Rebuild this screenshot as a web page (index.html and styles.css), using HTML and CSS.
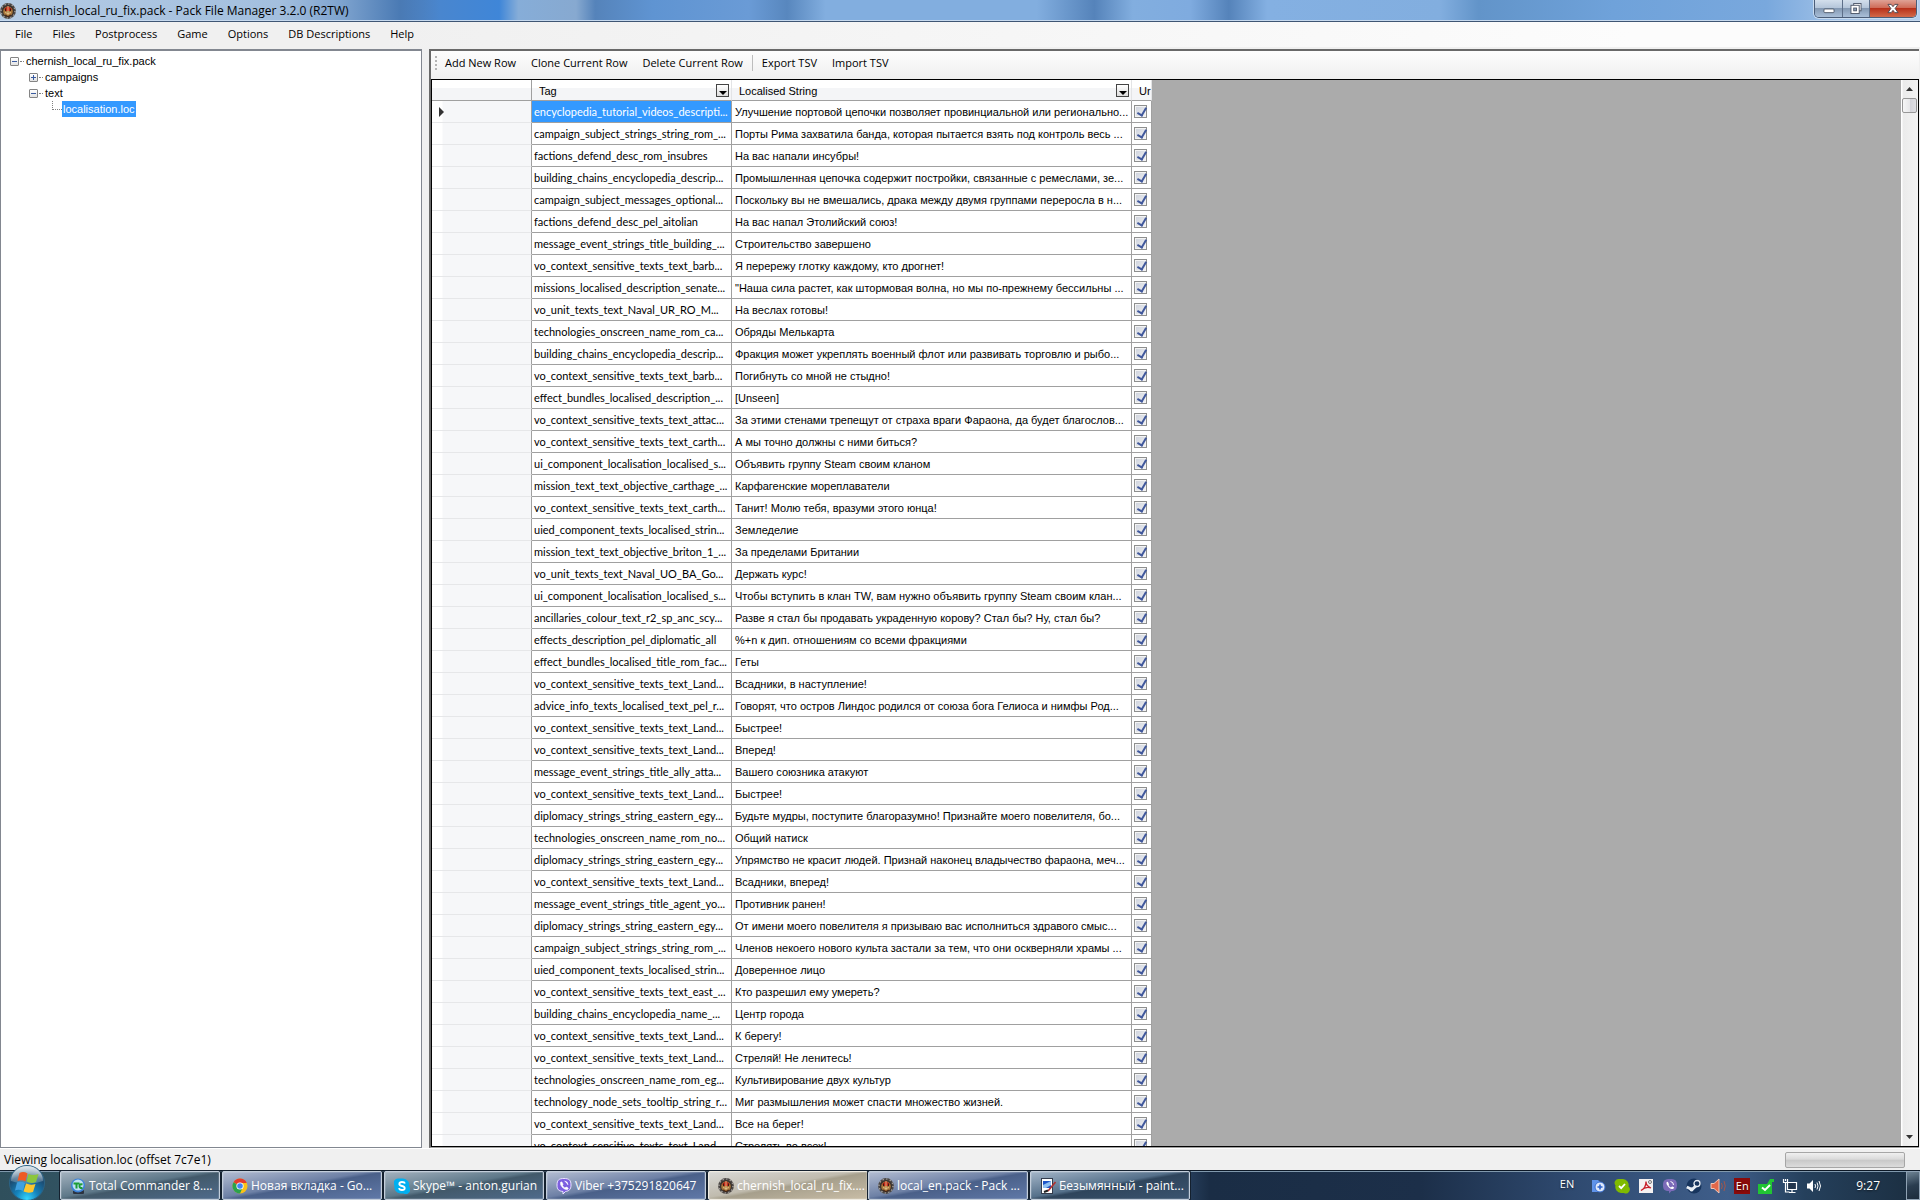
FILE: index.html
```html
<!DOCTYPE html>
<html lang="en">
<head>
<meta charset="utf-8">
<title>chernish_local_ru_fix.pack - Pack File Manager 3.2.0 (R2TW)</title>
<link rel="stylesheet" href="styles.css">
</head>
<body>
<svg class="defs" aria-hidden="true">
  <symbol id="emblem" viewBox="0 0 16 16">
    <circle cx="8" cy="8" r="7" fill="#3a332e" stroke="#4a4644" stroke-width="1.800"/>
    <circle cx="8" cy="8" r="7" fill="none" stroke="#b5b0ac" stroke-width="1.200" stroke-dasharray="1.200 2.460"/>
    <ellipse cx="8" cy="8.500" rx="4.800" ry="5" fill="#a8763c"/>
    <path d="M4 6 8 3l4 3-1.500 2h-5z" fill="#c22a1c"/>
    <path d="M8 3v9M5 9.500l3 1 3-1" stroke="#e8cf96" stroke-width=".8" fill="none"/>
    <path d="M5.500 5.500v2.500M10.500 5.500v2.500M5 12l3 1.500 3-1.500" stroke="#3a1c10" stroke-width="1" fill="none"/>
  </symbol>
</svg>

<header class="titlebar">
  <svg class="app-icon"><use href="#emblem"/></svg>
  <h1>chernish_local_ru_fix.pack - Pack File Manager 3.2.0 (R2TW)</h1>
  <div class="window-buttons">
    <button type="button" class="win-min" aria-label="Minimize"><svg viewBox="0 0 12 12"><rect x=".5" y="6.500" width="11" height="4" rx="1" fill="#fff" stroke="#4c5668"/></svg></button>
    <button type="button" class="win-max" aria-label="Restore"><svg viewBox="0 0 12 12"><rect x="3.500" y=".5" width="8" height="8" fill="#fff" stroke="#4c5668"/><rect x=".5" y="2.500" width="9" height="9" fill="#fff" stroke="#4c5668"/><rect x="3.500" y="5.500" width="3" height="3" fill="#8fa3bd" stroke="#4c5668"/></svg></button>
    <button type="button" class="win-close" aria-label="Close"><svg viewBox="0 0 12 12"><path d="M.5 1.500h3.500l2 2.500 2-2.500h3.500L8.300 6l3.200 4.500H8L6 8l-2 2.500H.5L3.700 6z" fill="#fff" stroke="#4c4650"/></svg></button>
  </div>
</header>

<nav class="menubar" aria-label="Main menu">
  <button type="button">File</button>
  <button type="button">Files</button>
  <button type="button">Postprocess</button>
  <button type="button">Game</button>
  <button type="button">Options</button>
  <button type="button">DB Descriptions</button>
  <button type="button">Help</button>
</nav>

<main class="workspace">
  <section class="tree-panel" aria-label="Pack contents">
    <ul class="tree">
      <li><div class="node"><span class="toggle open"></span>chernish_local_ru_fix.pack</div>
        <ul>
          <li><div class="node"><span class="toggle closed"></span>campaigns</div></li>
          <li><div class="node"><span class="toggle open"></span>text</div>
            <ul>
              <li><div class="node leaf"><span class="selected">localisation.loc</span></div></li>
            </ul>
          </li>
        </ul>
      </li>
    </ul>
  </section>

  <section class="editor" aria-label="Localisation editor">
    <div class="toolbar">
      <span class="grip"></span>
      <button type="button">Add New Row</button>
      <button type="button">Clone Current Row</button>
      <button type="button">Delete Current Row</button>
      <span class="divider"></span>
      <button type="button">Export TSV</button>
      <button type="button">Import TSV</button>
    </div>
    <div class="grid-frame">
      <div class="grid-area">
        <table class="grid">
          <colgroup><col class="c-head"><col class="c-tag"><col class="c-text"><col class="c-check"></colgroup>
          <thead>
            <tr>
              <td></td>
              <th scope="col"><div class="head">Tag<button type="button" class="filter" aria-label="Filter Tag"></button></div></th>
              <th scope="col"><div class="head">Localised String<button type="button" class="filter" aria-label="Filter Localised String"></button></div></th>
              <th scope="col"><div class="head">Ur</div></th>
            </tr>
          </thead>
          <tbody>
            <tr class="current"><th scope="row"><span class="marker"></span></th><td>encyclopedia_tutorial_videos_descripti...</td><td>Улучшение портовой цепочки позволяет провинциальной или регионально...</td><td><input type="checkbox" checked aria-label="Row 1"></td></tr>
            <tr><th scope="row"></th><td>campaign_subject_strings_string_rom_...</td><td>Порты Рима захватила банда, которая пытается взять под контроль весь ...</td><td><input type="checkbox" checked aria-label="Row 2"></td></tr>
            <tr><th scope="row"></th><td>factions_defend_desc_rom_insubres</td><td>На вас напали инсубры!</td><td><input type="checkbox" checked aria-label="Row 3"></td></tr>
            <tr><th scope="row"></th><td>building_chains_encyclopedia_descrip...</td><td>Промышленная цепочка содержит постройки, связанные с ремеслами, зе...</td><td><input type="checkbox" checked aria-label="Row 4"></td></tr>
            <tr><th scope="row"></th><td>campaign_subject_messages_optional...</td><td>Поскольку вы не вмешались, драка между двумя группами переросла в н...</td><td><input type="checkbox" checked aria-label="Row 5"></td></tr>
            <tr><th scope="row"></th><td>factions_defend_desc_pel_aitolian</td><td>На вас напал Этолийский союз!</td><td><input type="checkbox" checked aria-label="Row 6"></td></tr>
            <tr><th scope="row"></th><td>message_event_strings_title_building_...</td><td>Строительство завершено</td><td><input type="checkbox" checked aria-label="Row 7"></td></tr>
            <tr><th scope="row"></th><td>vo_context_sensitive_texts_text_barb...</td><td>Я перережу глотку каждому, кто дрогнет!</td><td><input type="checkbox" checked aria-label="Row 8"></td></tr>
            <tr><th scope="row"></th><td>missions_localised_description_senate...</td><td>"Наша сила растет, как штормовая волна, но мы по-прежнему бессильны ...</td><td><input type="checkbox" checked aria-label="Row 9"></td></tr>
            <tr><th scope="row"></th><td>vo_unit_texts_text_Naval_UR_RO_M...</td><td>На веслах готовы!</td><td><input type="checkbox" checked aria-label="Row 10"></td></tr>
            <tr><th scope="row"></th><td>technologies_onscreen_name_rom_ca...</td><td>Обряды Мелькарта</td><td><input type="checkbox" checked aria-label="Row 11"></td></tr>
            <tr><th scope="row"></th><td>building_chains_encyclopedia_descrip...</td><td>Фракция может укреплять военный флот или развивать торговлю и рыбо...</td><td><input type="checkbox" checked aria-label="Row 12"></td></tr>
            <tr><th scope="row"></th><td>vo_context_sensitive_texts_text_barb...</td><td>Погибнуть со мной не стыдно!</td><td><input type="checkbox" checked aria-label="Row 13"></td></tr>
            <tr><th scope="row"></th><td>effect_bundles_localised_description_...</td><td>[Unseen]</td><td><input type="checkbox" checked aria-label="Row 14"></td></tr>
            <tr><th scope="row"></th><td>vo_context_sensitive_texts_text_attac...</td><td>За этими стенами трепещут от страха враги Фараона, да будет благослов...</td><td><input type="checkbox" checked aria-label="Row 15"></td></tr>
            <tr><th scope="row"></th><td>vo_context_sensitive_texts_text_carth...</td><td>А мы точно должны с ними биться?</td><td><input type="checkbox" checked aria-label="Row 16"></td></tr>
            <tr><th scope="row"></th><td>ui_component_localisation_localised_s...</td><td>Объявить группу Steam своим кланом</td><td><input type="checkbox" checked aria-label="Row 17"></td></tr>
            <tr><th scope="row"></th><td>mission_text_text_objective_carthage_...</td><td>Карфагенские мореплаватели</td><td><input type="checkbox" checked aria-label="Row 18"></td></tr>
            <tr><th scope="row"></th><td>vo_context_sensitive_texts_text_carth...</td><td>Танит! Молю тебя, вразуми этого юнца!</td><td><input type="checkbox" checked aria-label="Row 19"></td></tr>
            <tr><th scope="row"></th><td>uied_component_texts_localised_strin...</td><td>Земледелие</td><td><input type="checkbox" checked aria-label="Row 20"></td></tr>
            <tr><th scope="row"></th><td>mission_text_text_objective_briton_1_...</td><td>За пределами Британии</td><td><input type="checkbox" checked aria-label="Row 21"></td></tr>
            <tr><th scope="row"></th><td>vo_unit_texts_text_Naval_UO_BA_Go...</td><td>Держать курс!</td><td><input type="checkbox" checked aria-label="Row 22"></td></tr>
            <tr><th scope="row"></th><td>ui_component_localisation_localised_s...</td><td>Чтобы вступить в клан TW, вам нужно объявить группу Steam своим клан...</td><td><input type="checkbox" checked aria-label="Row 23"></td></tr>
            <tr><th scope="row"></th><td>ancillaries_colour_text_r2_sp_anc_scy...</td><td>Разве я стал бы продавать украденную корову? Стал бы? Ну, стал бы?</td><td><input type="checkbox" checked aria-label="Row 24"></td></tr>
            <tr><th scope="row"></th><td>effects_description_pel_diplomatic_all</td><td>%+n к дип. отношениям со всеми фракциями</td><td><input type="checkbox" checked aria-label="Row 25"></td></tr>
            <tr><th scope="row"></th><td>effect_bundles_localised_title_rom_fac...</td><td>Геты</td><td><input type="checkbox" checked aria-label="Row 26"></td></tr>
            <tr><th scope="row"></th><td>vo_context_sensitive_texts_text_Land...</td><td>Всадники, в наступление!</td><td><input type="checkbox" checked aria-label="Row 27"></td></tr>
            <tr><th scope="row"></th><td>advice_info_texts_localised_text_pel_r...</td><td>Говорят, что остров Линдос родился от союза бога Гелиоса и нимфы Род...</td><td><input type="checkbox" checked aria-label="Row 28"></td></tr>
            <tr><th scope="row"></th><td>vo_context_sensitive_texts_text_Land...</td><td>Быстрее!</td><td><input type="checkbox" checked aria-label="Row 29"></td></tr>
            <tr><th scope="row"></th><td>vo_context_sensitive_texts_text_Land...</td><td>Вперед!</td><td><input type="checkbox" checked aria-label="Row 30"></td></tr>
            <tr><th scope="row"></th><td>message_event_strings_title_ally_atta...</td><td>Вашего союзника атакуют</td><td><input type="checkbox" checked aria-label="Row 31"></td></tr>
            <tr><th scope="row"></th><td>vo_context_sensitive_texts_text_Land...</td><td>Быстрее!</td><td><input type="checkbox" checked aria-label="Row 32"></td></tr>
            <tr><th scope="row"></th><td>diplomacy_strings_string_eastern_egy...</td><td>Будьте мудры, поступите благоразумно! Признайте моего повелителя, бо...</td><td><input type="checkbox" checked aria-label="Row 33"></td></tr>
            <tr><th scope="row"></th><td>technologies_onscreen_name_rom_no...</td><td>Общий натиск</td><td><input type="checkbox" checked aria-label="Row 34"></td></tr>
            <tr><th scope="row"></th><td>diplomacy_strings_string_eastern_egy...</td><td>Упрямство не красит людей. Признай наконец владычество фараона, меч...</td><td><input type="checkbox" checked aria-label="Row 35"></td></tr>
            <tr><th scope="row"></th><td>vo_context_sensitive_texts_text_Land...</td><td>Всадники, вперед!</td><td><input type="checkbox" checked aria-label="Row 36"></td></tr>
            <tr><th scope="row"></th><td>message_event_strings_title_agent_yo...</td><td>Противник ранен!</td><td><input type="checkbox" checked aria-label="Row 37"></td></tr>
            <tr><th scope="row"></th><td>diplomacy_strings_string_eastern_egy...</td><td>От имени моего повелителя я призываю вас исполниться здравого смыс...</td><td><input type="checkbox" checked aria-label="Row 38"></td></tr>
            <tr><th scope="row"></th><td>campaign_subject_strings_string_rom_...</td><td>Членов некоего нового культа застали за тем, что они оскверняли храмы ...</td><td><input type="checkbox" checked aria-label="Row 39"></td></tr>
            <tr><th scope="row"></th><td>uied_component_texts_localised_strin...</td><td>Доверенное лицо</td><td><input type="checkbox" checked aria-label="Row 40"></td></tr>
            <tr><th scope="row"></th><td>vo_context_sensitive_texts_text_east_...</td><td>Кто разрешил ему умереть?</td><td><input type="checkbox" checked aria-label="Row 41"></td></tr>
            <tr><th scope="row"></th><td>building_chains_encyclopedia_name_...</td><td>Центр города</td><td><input type="checkbox" checked aria-label="Row 42"></td></tr>
            <tr><th scope="row"></th><td>vo_context_sensitive_texts_text_Land...</td><td>К берегу!</td><td><input type="checkbox" checked aria-label="Row 43"></td></tr>
            <tr><th scope="row"></th><td>vo_context_sensitive_texts_text_Land...</td><td>Стреляй! Не ленитесь!</td><td><input type="checkbox" checked aria-label="Row 44"></td></tr>
            <tr><th scope="row"></th><td>technologies_onscreen_name_rom_eg...</td><td>Культивирование двух культур</td><td><input type="checkbox" checked aria-label="Row 45"></td></tr>
            <tr><th scope="row"></th><td>technology_node_sets_tooltip_string_r...</td><td>Миг размышления может спасти множество жизней.</td><td><input type="checkbox" checked aria-label="Row 46"></td></tr>
            <tr><th scope="row"></th><td>vo_context_sensitive_texts_text_Land...</td><td>Все на берег!</td><td><input type="checkbox" checked aria-label="Row 47"></td></tr>
            <tr><th scope="row"></th><td>vo_context_sensitive_texts_text_Land...</td><td>Стрелять во всех!</td><td><input type="checkbox" checked aria-label="Row 48"></td></tr>
          </tbody>
        </table>
      </div>
      <div class="scrollbar">
        <button type="button" aria-label="Scroll up"><svg viewBox="0 0 7 4"><path d="M0 4 3.500 0 7 4z" fill="#333"/></svg></button>
        <span class="thumb"></span>
        <button type="button" class="down" aria-label="Scroll down"><svg viewBox="0 0 7 4"><path d="M0 0h7L3.500 4z" fill="#333"/></svg></button>
      </div>
    </div>
  </section>
</main>

<footer class="statusbar">
  <span>Viewing localisation.loc (offset 7c7e1)</span>
  <span class="progress"></span>
</footer>

<nav class="taskbar" aria-label="Taskbar">
  <button type="button" class="start" aria-label="Start">
    <svg viewBox="0 0 38 36">
      <defs>
        <radialGradient id="orb" cx=".5" cy=".95" r=".9"><stop offset="0" stop-color="#35d6ff"/><stop offset=".35" stop-color="#1584bd"/><stop offset=".75" stop-color="#1c4a70"/><stop offset="1" stop-color="#7f9fb4"/></radialGradient>
        <linearGradient id="gloss" x2="0" y2="1"><stop offset="0" stop-color="#fff" stop-opacity=".75"/><stop offset="1" stop-color="#fff" stop-opacity=".15"/></linearGradient>
      </defs>
      <circle cx="19" cy="18" r="17.500" fill="url(#orb)" stroke="#2b6386"/>
      <path d="M3 16a16 15 0 0 1 32 0q-16 6-32 0z" fill="url(#gloss)"/>
      <path d="M11.500 8q4-2 8 .5l-2 8q-4-2-8-.5z" fill="#ee5a24"/>
      <path d="M20.500 9q4.500 2 10 0l-2.500 8q-5 2-9.500-.5z" fill="#8cc63e"/>
      <path d="M9 17.500q4-1.500 8 .5l-2 8q-4-2-8-.5z" fill="#3fa0e0"/>
      <path d="M18 18.500q4.500 2 9.500.500l-2.500 8q-5 1.500-9.500-.5z" fill="#fdc62f"/>
    </svg>
  </button>
  <div class="tasks">
    <button type="button" class="task teal"><svg viewBox="0 0 16 16"><rect x="3" y="12" width="11" height="4" rx="1" fill="#2c3340"/><circle cx="8" cy="7.500" r="7" fill="#3b82d8"/><circle cx="8" cy="7" r="5.500" fill="#bfe0f5"/><path d="M3.500 5.500h6M6.500 5.500v5M12.500 6.500q-3-1-3 1.500t3 2" stroke="#1d9c35" stroke-width="2" fill="none"/></svg>Total Commander 8....</button>
    <button type="button" class="task blue"><svg viewBox="0 0 16 16"><circle cx="8" cy="8" r="7.500" fill="#fbc116"/><path d="M8 8 1.500 4.250A7.500 7.500 0 0 1 14.500 4.250L14.500 5H8z" fill="#e33b2e"/><path d="M1.500 4.250A7.500 7.500 0 0 0 8 15.500L10.500 10z" fill="#2ba24c"/><circle cx="8" cy="8" r="3.600" fill="#fff"/><circle cx="8" cy="8" r="2.800" fill="#4285f4"/></svg>Новая вкладка - Go...</button>
    <button type="button" class="task teal"><svg viewBox="0 0 16 16"><path d="M5 .5h4a6.500 6.500 0 0 1 6 8 4.500 4.500 0 0 1-5.500 7h-3a6.500 6.500 0 0 1-6-8A4.500 4.500 0 0 1 5 .5z" fill="#00aff0"/><path d="M11 5.500Q10.500 4 8 4T5.300 6q0 1.400 2.700 2t2.700 2.200Q10.700 12 8 12t-3-1.800" stroke="#fff" stroke-width="1.800" fill="none"/></svg>Skype™ - anton.gurian</button>
    <button type="button" class="task blue"><svg viewBox="0 0 16 16"><path d="M8 .5c5 0 7 1.500 7 6.500 0 4.500-2 6-5.500 6.500L7 16v-2.500C2.500 13 1 11.500 1 7 1 2 3 .5 8 .5z" fill="#7d5fe0" stroke="#e9e3ff"/><path d="M4.500 4.500q1-1.500 2 .5t0 2.500q1 2 2.500 2.500 1-1.500 2.500-.5t0 2Q9 12 6.500 9.500T4.500 4.500zM8.500 3q3.500.5 3.500 4" fill="#fff" stroke="#fff" stroke-width=".6"/></svg>Viber +375291820647</button>
    <div class="task-pair">
      <button type="button" class="task active"><svg><use href="#emblem"/></svg>chernish_local_ru_fix....</button>
      <button type="button" class="task blue"><svg><use href="#emblem"/></svg>local_en.pack - Pack ...</button>
    </div>
    <button type="button" class="task dark"><svg viewBox="0 0 16 16"><rect x="1.500" y=".5" width="11" height="15" fill="#fff" stroke="#333c4c"/><path d="M3 3h8v7H3z" fill="#1e56c8"/><path d="M3 7l8-4v4l-5 3H3z" fill="#8fc0f0"/><path d="M15.500 4 8 13" stroke="#b03030" stroke-width="1.600"/><path d="M4 14l4-1.500" stroke="#222" stroke-width="2"/></svg>Безымянный - paint...</button>
  </div>
  <div class="tray">
    <span class="lang">EN</span>
    <div class="tray-icons">
      <svg viewBox="0 0 16 16"><path d="M2 2h6l2 2v10H2z" fill="#5f93ea"/><circle cx="10" cy="9" r="5" fill="#dfe9fb" stroke="#3a6fd0"/><path d="M10 6.500v5M7.500 9h5" stroke="#2c62cc" stroke-width="1.600"/></svg>
      <svg viewBox="0 0 16 16"><path d="M5 1h4a6 6 0 0 1 5.500 7.500A4 4 0 0 1 10 15H7a6 6 0 0 1-5.500-7.500A4 4 0 0 1 5 1z" fill="#7fba00"/><path d="M5 8l2.200 2.200L11 6" stroke="#fff" stroke-width="1.800" fill="none"/></svg>
      <svg viewBox="0 0 16 16"><rect x="1" y="1" width="14" height="14" fill="#f4f1f1"/><path d="M3 12.500Q8 10 8 3.500q0 4.500 5 6.500Q8 8 3 12.500z" fill="none" stroke="#c8202a" stroke-width="1.300"/><circle cx="12" cy="4" r="1.500" fill="none" stroke="#777"/></svg>
      <svg viewBox="0 0 16 16"><path d="M8 1c5 0 7 1.500 7 6s-2 6-5.500 6L7 15.500V13C2.500 13 1 11.500 1 7s2-6 7-6z" fill="#7c6bb8"/><path d="M4.500 4.500q1-1.500 2 .5t0 2q1 2 2.500 2.500 1-1.500 2.500-.5t0 1.500Q9 12 6.500 9T4.500 4.500z" fill="#fff"/><path d="M8.500 3.500q3 .5 3 3.500" stroke="#fff" fill="none"/></svg>
      <svg viewBox="0 0 16 16"><circle cx="8" cy="8" r="7.500" fill="#17355e"/><path d="M.8 9 6 11.500 11 7" stroke="#e8eef5" stroke-width="3" fill="none"/><circle cx="11" cy="5.500" r="3" fill="#17355e" stroke="#e8eef5" stroke-width="1.300"/><circle cx="5.500" cy="11.500" r="2" fill="#e8eef5"/></svg>
      <svg viewBox="0 0 16 16"><path d="M1 5.500h3L9 1v14l-5-4.500H1z" fill="#e2684a" stroke="#f3c6b5"/><path d="M11.500 5q1.500 3 0 6M14 3q2.500 5 0 10" stroke="#a4574a" fill="none"/></svg>
      <span class="layout">En</span>
      <svg viewBox="0 0 16 16"><path d="M0 6h9l3-5h4v3h-2v12H0z" fill="#21c433"/><path d="M4 9.500 7 12l5-5" stroke="#fff" stroke-width="2" fill="none"/></svg>
      <svg viewBox="0 0 16 16"><path d="M5.500 4.500h9v7h-9zM7 14.500h6.500M10 12v2" fill="#24364d" stroke="#fff" stroke-width="1.200"/><path d="M1.500 1v3.500h4V1M3.500 5v9h4M3.500 1v2" stroke="#fff" stroke-width="1.200" fill="none"/></svg>
      <svg viewBox="0 0 16 16"><path d="M1 5.500h2.500L7 2v12l-3.500-3.500H1z" fill="#fff"/><path d="M9 6q1 2 0 4M11 4.500q2 3.500 0 7M13 3q3 5 0 10" stroke="#fff" fill="none"/></svg>
    </div>
    <time>9:27</time>
    <button type="button" class="show-desktop" aria-label="Show desktop"></button>
  </div>
</nav>
</body>
</html>
```
FILE: styles.css
```css
* { box-sizing: border-box; }

body {
  margin: 0;
  height: 100vh;
  display: flex;
  flex-direction: column;
  overflow: hidden;
  background: #f0f0f0;
  color: #000;
  font: 12px/16px "Open Sans", "Noto Sans", sans-serif;
}

button {
  margin: 0;
  padding: 0;
  border: 0;
  background: none;
  color: inherit;
  font: inherit;
  white-space: nowrap;
}

.defs { position: absolute; width: 0; height: 0; }

/* Title bar */
.titlebar {
  flex: none;
  display: flex;
  align-items: center;
  gap: 5px;
  height: 22px;
  border-bottom: 1px solid #3f5674;
  box-shadow: inset 0 -1px #c6d9ee;
  background:
    linear-gradient(90deg, #b4cbe4 0, #a3bfde 280px, #7fa4cf 340px, #4a7ab4 400px, transparent 440px),
    linear-gradient(90deg, #4a7ab4 0, #4c86cc 22%, #3f86d8 26%, #86add8 27%, #87a9d0 30%, #5583ba 31%, #5f94d2 34%, #6a9bd6 39%, #5887be 41%, #82aedf 43%, #82aedf 54%, #5583ba 57%, #82aedf 59%, #7fabdf 62%, #5583ba 64%, #84b0e2 66%, #82aedf 75%, #6294c9 77%, #6fa2da 84%, #79a8dd 92%, #a3c3e8 96%, #b4cfee 100%);
}
.titlebar h1 { margin: 0; flex: 1; font-size: 12px; font-weight: 400; }
.app-icon { width: 16px; height: 16px; }

.window-buttons {
  align-self: flex-start;
  display: flex;
  height: 18px;
  margin-right: 3px;
  border: 1px solid #4b5d78;
  border-top: 0;
  border-radius: 0 0 5px 5px;
  overflow: hidden;
  box-shadow: 0 0 0 1px #c9dcf0;
}
.window-buttons button { display: flex; align-items: center; justify-content: center; }
.window-buttons svg { width: 12px; height: 11px; }
.win-min, .win-max {
  width: 28px;
  border-right: 1px solid #5d6f89;
  background: linear-gradient(#d3dfec, #b5c6da 45%, #8499b3 50%, #a9bfd8);
}
.win-max { width: 27px; }
.win-close { width: 46px; background: linear-gradient(#dfa295, #cf6c58 45%, #b8311a 50%, #d2694a); }

/* Menu */
.menubar {
  flex: none;
  display: flex;
  align-items: center;
  gap: 20px;
  height: 25px;
  padding: 0 15px 2px;
  background: linear-gradient(90deg, #f0f0f0 20%, #fcfcfc 85%);
  font-size: 11px;
}

/* Main split */
.workspace {
  flex: 1;
  min-height: 0;
  display: flex;
  gap: 7px;
  padding: 2px 1px 0 0;
}
.tree-panel {
  flex: none;
  width: 422px;
  border: 2px solid #828790;
  border-width: 2px 1px 1px;
  background: #fff;
  font: 11px/16px "Liberation Sans", sans-serif;
}
.tree, .tree ul { margin: 0; padding: 0; list-style: none; }
.tree { padding: 2px 0 0 9px; }
.tree ul { padding-left: 19px; }
.node { display: flex; align-items: center; height: 16px; }
.node.leaf::before {
  content: "";
  width: 9px;
  height: 8px;
  margin: 0 0 8px 4px;
  border: 1px dotted #808080;
  border-width: 0 0 1px 1px;
}
.toggle {
  position: relative;
  flex: none;
  width: 9px;
  height: 9px;
  margin-right: 7px;
  border: 1px solid #848484;
  border-radius: 1px;
  background:
    linear-gradient(#3a5ba0, #3a5ba0) center / 5px 1px no-repeat,
    linear-gradient(#fff, #e2e2e2);
}
.toggle::after { content: ""; position: absolute; left: 9px; top: 3px; width: 4px; border-top: 1px dotted #808080; }
.toggle.closed {
  background:
    linear-gradient(#3a5ba0, #3a5ba0) center / 5px 1px no-repeat,
    linear-gradient(#3a5ba0, #3a5ba0) center / 1px 5px no-repeat,
    linear-gradient(#fff, #e2e2e2);
}
.selected { padding: 0 1px; background: #3399ff; color: #fff; }

.editor {
  flex: 1;
  min-width: 0;
  display: flex;
  flex-direction: column;
  border: 2px solid #696969;
  border-color: #696969 #e3e3e3 #a0a0a0 #696969;
  border-right-width: 0;
  border-bottom-width: 1px;
}
.toolbar {
  flex: none;
  display: flex;
  align-items: center;
  gap: 15px;
  height: 28px;
  padding: 0 4px 4px;
  background: linear-gradient(#fdfdfd, #efefef);
  font-size: 11px;
}
.grip { width: 2px; height: 14px; margin-right: -7px; background: repeating-linear-gradient(#b4b4b4 0 2px, transparent 2px 4px); }
.divider { width: 1px; height: 16px; margin: 0 -6px; background: #bdbdbd; }

.grid-frame {
  flex: 1;
  min-height: 0;
  display: flex;
  border: 1px solid #000;
  background: #ababab;
}
.grid-area { flex: 1; min-width: 0; overflow: hidden; }
.grid {
  table-layout: fixed;
  width: 720px;
  border-collapse: separate;
  border-spacing: 0;
  background: #fff;
  font: 11px/14px "Liberation Sans", sans-serif;
}
.c-head { width: 100px; }
.c-tag { width: 200px; }
.c-text { width: 400px; }
.c-check { width: 20px; }

.grid th, .grid td { height: 22px; padding: 0 0 0 3px; overflow: hidden; white-space: nowrap; text-align: left; font-weight: 400; }
.grid td { border: 1px solid #a0a0a0; border-width: 0 1px 1px 0; }
.grid thead th, .grid thead td {
  height: 21px;
  border-bottom: 1px solid #a0a0a0;
  background: linear-gradient(#fff 40%, #f4f5f7 41%, #f4f5f7);
}
.grid thead th { border-right: 1px solid #e3e4e6; padding: 1px 0 0 7px; }
.head { display: flex; align-items: center; justify-content: space-between; padding-right: 2px; }
.filter {
  width: 13px;
  height: 13px;
  border: 1px solid #444;
  background: linear-gradient(#fff, #ddd);
}
.filter::before { content: ""; display: block; margin: 5px 2px 0; border: 4px solid transparent; border-width: 4px 4px 0; border-top-color: #000; width: 0; }
.grid tbody th {
  border-right: 1px solid #a0a0a0;
  border-bottom: 1px solid #e6e7e9;
  background: linear-gradient(90deg, #fff 10px, #f6f7f9 11px);
}
.marker { display: block; margin-left: 4px; width: 0; border: 5px solid transparent; border-width: 5px 0 5px 5px; border-left-color: #333; }
.grid tbody td:nth-child(2) { padding-left: 2px; font-family: Lato, "Liberation Sans", sans-serif; }
.current td:nth-child(2) { background: #3399ff; color: #fff; }
.grid td:last-child { padding: 0 0 0 2px; }
.grid input {
  appearance: none;
  display: block;
  width: 13px;
  height: 13px;
  margin: 0;
  border: 1px solid #8e8f8f;
  background: linear-gradient(135deg, #ccd1dc, #f4f4f4);
  box-shadow: inset 0 0 0 1px #f4f4f4;
}
.grid input::before {
  content: "";
  display: block;
  width: 4px;
  height: 8px;
  margin: 0 0 0 4px;
  border: solid #40589c;
  border-width: 0 2px 2px 0;
  transform: rotate(30deg);
}

.scrollbar {
  flex: none;
  display: flex;
  flex-direction: column;
  align-items: center;
  width: 17px;
  background: linear-gradient(90deg, #fff 1px, #ebebeb 2px, #f3f3f3);
}
.scrollbar button { display: flex; align-items: center; justify-content: center; width: 17px; height: 18px; }
.scrollbar svg { width: 7px; height: 4px; }
.scrollbar .down { margin-top: auto; }
.thumb { width: 15px; height: 15px; border: 1px solid #979797; border-radius: 2px; background: linear-gradient(90deg, #f6f6f6, #e8e8ea 50%, #d2d2d8 52%, #dedee2); }

/* Status line */
.statusbar {
  flex: none;
  display: flex;
  align-items: center;
  justify-content: space-between;
  height: 22px;
  padding: 0 15px 0 4px;
  border-top: 1px solid #fff;
  background: #f0f0f0;
}
.progress {
  width: 120px;
  height: 16px;
  border: 1px solid #a6a6a6;
  border-radius: 2px;
  background: linear-gradient(#f0f0f0, #dadada 45%, #c8c8c8 50%, #dcdcdc);
}

/* Taskbar */
.taskbar {
  flex: none;
  display: flex;
  height: 30px;
  border-top: 1px solid #0c1826;
  box-shadow: inset 0 1px #8098ac;
  background: linear-gradient(90deg, #2f4f5c 0, #365a6c 10%, #3d5c84 30%, #3b5a80 60%, #1a2d45 63%, #1c2f49 74%, #2f4a70 82%, #3f5e8a 90%, #25405c 94%, #1b2e40 100%);
  color: #fff;
  text-shadow: 0 1px 2px #0008;
}
.start { position: relative; width: 54px; margin-right: 6px; }
.start svg { position: absolute; left: 8px; top: -6px; width: 38px; height: 36px; }
.tasks { display: flex; gap: 2px; }
.task-pair { display: flex; }
.task {
  display: flex;
  align-items: center;
  gap: 3px;
  width: 160px;
  height: 29px;
  padding: 0 9px;
  overflow: hidden;
  border: 1px solid #c3cedb;
  border-radius: 2px;
  box-shadow: inset 0 0 0 1px #ffffff22, 0 0 0 1px #14202e;
}
.task svg { flex: none; width: 16px; height: 16px; }
.task.teal { background: linear-gradient(170deg, #a3b2bf, #5d7788 46%, #42596a 52%, #4f6b8c); }
.task.blue { background: linear-gradient(170deg, #b3bdd2, #6d80a5 46%, #4a6089 52%, #6079a8); }
.task.dark { background: linear-gradient(170deg, #a3b5c8, #55708a 46%, #2f455c 52%, #3a5470); }
.task.active { background: linear-gradient(170deg, #d9d9d6, #c0bbae 46%, #a69f8c 52%, #c9bda6); border-color: #f0ece2; }

.tray { display: flex; align-items: center; margin-left: auto; }
.lang { margin: 0 16px 4px 0; font-size: 11px; }
.tray-icons { display: flex; align-items: center; gap: 8px; }
.tray-icons svg { width: 16px; height: 16px; }
.layout { width: 16px; height: 16px; background: #8a0a0a; text-align: center; font-size: 11px; }
.tray time { margin: 0 26px 0 34px; }
.show-desktop { width: 14px; height: 29px; border: 1px solid #8fa2b4; background: linear-gradient(165deg, #6f8494, #2a3d50 50%, #1c2c3c); }
```
